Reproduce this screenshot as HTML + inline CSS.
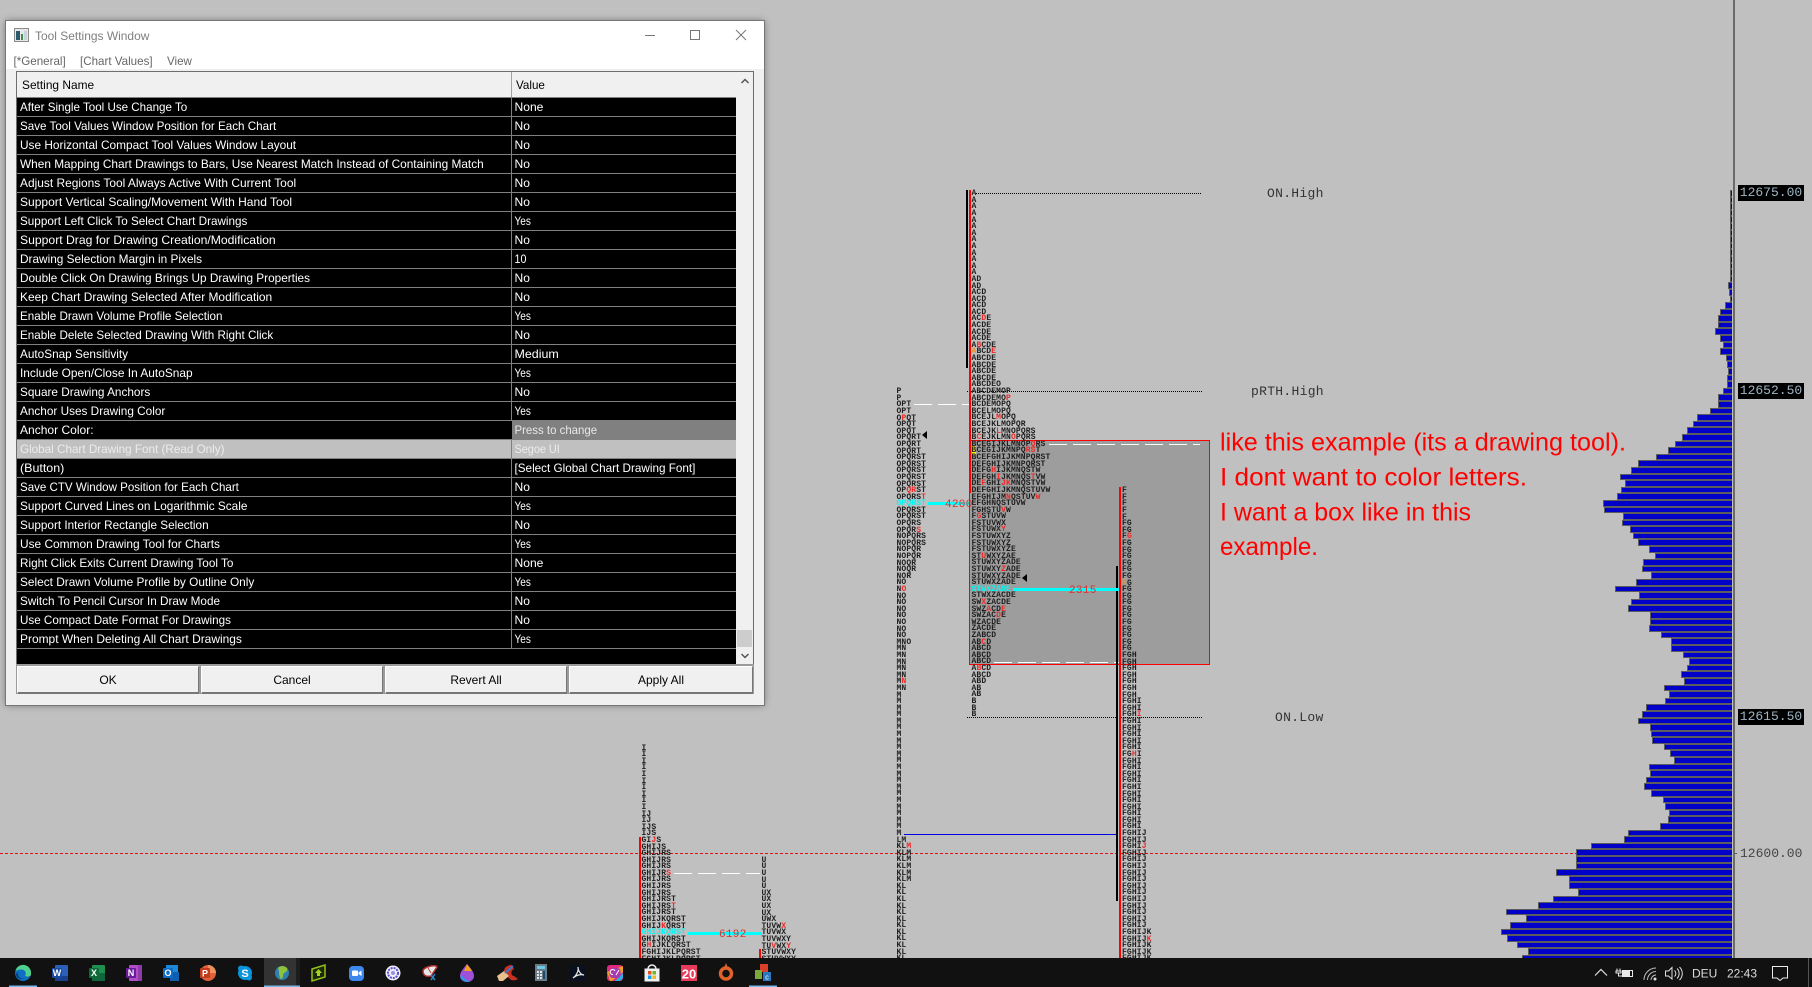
<!DOCTYPE html>
<html lang="en"><head><meta charset="utf-8"><title>Tool Settings Window</title>
<style>
html,body{margin:0;padding:0;background:#c0c0c0}
#p{position:relative;width:1812px;height:987px;overflow:hidden;background:#c0c0c0;font-family:"Liberation Sans",sans-serif}
.a{position:absolute}
pre{position:absolute;margin:0;font:bold 8px/6.6px "Liberation Mono",monospace;color:#1e1e1e;letter-spacing:.13px}
pre b{color:#f02828}
pre em{font-style:normal;color:#f08a1a}
pre s{text-decoration:none;color:#00f6f6}
pre u{text-decoration:none;background:#f2f20a}
.dash{position:absolute;height:1px;background:repeating-linear-gradient(90deg,#fff 0 18px,transparent 18px 24px)}
.dot{position:absolute;height:1px;background:repeating-linear-gradient(90deg,#000 0 1px,transparent 1px 2px)}
.num{position:absolute;font:11px/12px "Liberation Mono",monospace;color:#d83030;letter-spacing:.3px}
.pl{position:absolute;left:1738px;width:66px;height:16px;background:#000;color:#9fb4c2;font:13px/16px "Liberation Mono",monospace;text-align:center}
.lbl{position:absolute;font:13px/14px "Liberation Mono",monospace;color:#333;letter-spacing:.3px}
#bars{position:absolute;left:1480px;top:190px;width:252px}
#bars i{display:block;height:6.6px;box-sizing:border-box;border:1px solid #5c5c5c;border-right:0;background:#0000c8}
#win{position:absolute;left:6px;top:21px;width:758px;height:684px;background:#f0f0f0;box-shadow:0 0 7px rgba(0,0,0,.45);outline:1px solid #777;font-size:12px}
#rows{position:absolute;left:17px;top:98px;width:719px;height:566px;background:#000}
.r{display:flex;height:18px;border-bottom:1px solid #808080}
.r span:first-child{width:494px;border-right:1px solid #808080}
.r span:last-child{flex:1}
.btn{position:absolute;top:666px;height:25px;background:#f0f0f0;border:1px solid #fff;border-right-color:#777;border-bottom:2px solid #777;text-align:center;line-height:26px;color:#000;font-size:12px;box-sizing:content-box}
</style></head><body><div id="p">

<!-- chart drawing box -->
<div class="a" style="left:969px;top:440px;width:239px;height:223px;background:#9d9d9d;border:1px solid #f00"></div>

<!-- profile bars -->
<div id="bars"><i style="margin-left:250px"></i><i style="margin-left:250px"></i><i style="margin-left:250px"></i><i style="margin-left:250px"></i><i style="margin-left:250px"></i><i style="margin-left:250px"></i><i style="margin-left:250px"></i><i style="margin-left:250px"></i><i style="margin-left:250px"></i><i style="margin-left:250px"></i><i style="margin-left:250px"></i><i style="margin-left:250px"></i><i style="margin-left:250px"></i><i style="margin-left:250px"></i><i style="margin-left:248px"></i><i style="margin-left:249px"></i><i style="margin-left:250px"></i><i style="margin-left:245px"></i><i style="margin-left:240px"></i><i style="margin-left:238px"></i><i style="margin-left:238px"></i><i style="margin-left:235px"></i><i style="margin-left:240px"></i><i style="margin-left:243px"></i><i style="margin-left:240px"></i><i style="margin-left:246px"></i><i style="margin-left:247px"></i><i style="margin-left:248px"></i><i style="margin-left:247px"></i><i style="margin-left:247px"></i><i style="margin-left:243px"></i><i style="margin-left:238px"></i><i style="margin-left:238px"></i><i style="margin-left:230px"></i><i style="margin-left:217px"></i><i style="margin-left:213px"></i><i style="margin-left:207px"></i><i style="margin-left:202px"></i><i style="margin-left:195px"></i><i style="margin-left:188px"></i><i style="margin-left:176px"></i><i style="margin-left:158px"></i><i style="margin-left:151px"></i><i style="margin-left:140px"></i><i style="margin-left:145px"></i><i style="margin-left:141px"></i><i style="margin-left:137px"></i><i style="margin-left:123px"></i><i style="margin-left:124px"></i><i style="margin-left:143px"></i><i style="margin-left:142px"></i><i style="margin-left:150px"></i><i style="margin-left:153px"></i><i style="margin-left:158px"></i><i style="margin-left:169px"></i><i style="margin-left:175px"></i><i style="margin-left:163px"></i><i style="margin-left:162px"></i><i style="margin-left:171px"></i><i style="margin-left:156px"></i><i style="margin-left:135px"></i><i style="margin-left:159px"></i><i style="margin-left:151px"></i><i style="margin-left:148px"></i><i style="margin-left:170px"></i><i style="margin-left:170px"></i><i style="margin-left:169px"></i><i style="margin-left:181px"></i><i style="margin-left:191px"></i><i style="margin-left:191px"></i><i style="margin-left:203px"></i><i style="margin-left:209px"></i><i style="margin-left:207px"></i><i style="margin-left:201px"></i><i style="margin-left:204px"></i><i style="margin-left:184px"></i><i style="margin-left:189px"></i><i style="margin-left:185px"></i><i style="margin-left:166px"></i><i style="margin-left:162px"></i><i style="margin-left:158px"></i><i style="margin-left:170px"></i><i style="margin-left:171px"></i><i style="margin-left:172px"></i><i style="margin-left:184px"></i><i style="margin-left:190px"></i><i style="margin-left:194px"></i><i style="margin-left:169px"></i><i style="margin-left:170px"></i><i style="margin-left:166px"></i><i style="margin-left:164px"></i><i style="margin-left:171px"></i><i style="margin-left:183px"></i><i style="margin-left:185px"></i><i style="margin-left:189px"></i><i style="margin-left:188px"></i><i style="margin-left:180px"></i><i style="margin-left:148px"></i><i style="margin-left:144px"></i><i style="margin-left:111px"></i><i style="margin-left:96px"></i><i style="margin-left:96px"></i><i style="margin-left:96px"></i><i style="margin-left:76px"></i><i style="margin-left:89px"></i><i style="margin-left:89px"></i><i style="margin-left:98px"></i><i style="margin-left:73px"></i><i style="margin-left:58px"></i><i style="margin-left:26px"></i><i style="margin-left:46px"></i><i style="margin-left:30px"></i><i style="margin-left:21px"></i><i style="margin-left:27px"></i><i style="margin-left:37px"></i><i style="margin-left:48px"></i><i style="margin-left:42px"></i></div>
<div class="a" style="left:1733px;top:0;width:2px;height:958px;background:#6a6a6a"></div>

<!-- lines -->
<div class="a" style="left:0;top:853px;width:1576px;height:1px;background:repeating-linear-gradient(90deg,#e01010 0 3px,transparent 3px 5px)"></div>
<div class="dot" style="left:976px;top:193px;width:226px"></div>
<div class="dot" style="left:967px;top:391px;width:235px"></div>
<div class="dot" style="left:967px;top:717px;width:235px"></div>
<div class="dash" style="left:914px;top:404px;width:55px"></div>
<div class="dash" style="left:1049px;top:444px;width:151px"></div>
<div class="dash" style="left:994px;top:662px;width:126px"></div>
<div class="dash" style="left:674px;top:873px;width:86px"></div>
<div class="a" style="left:966px;top:190px;width:2px;height:178px;background:#000"></div>
<div class="a" style="left:969px;top:190px;width:2px;height:303px;background:#f00"></div>
<div class="a" style="left:1116px;top:566px;width:2px;height:335px;background:#000"></div>
<div class="a" style="left:1119px;top:487px;width:2px;height:471px;background:#f00"></div>
<div class="a" style="left:639px;top:837px;width:2px;height:121px;background:#f00"></div>
<div class="a" style="left:759px;top:949px;width:2px;height:9px;background:#f00"></div>
<div class="a" style="left:904px;top:834px;width:212px;height:1px;background:#0000e0"></div>
<div class="a" style="left:928px;top:502px;width:41px;height:3px;background:#0ff"></div>
<div class="a" style="left:1013px;top:588px;width:106px;height:3px;background:#0ff"></div>
<div class="a" style="left:688px;top:932px;width:74px;height:3px;background:#0ff"></div>
<div class="num" style="left:945px;top:499px">4200</div>
<div class="num" style="left:1069px;top:585px">2315</div>
<div class="num" style="left:719px;top:929px">6192</div>
<svg class="a" style="left:920px;top:428px" width="14" height="14"><polygon points="2,7 7,3 7,11" fill="#000"/></svg>
<svg class="a" style="left:1020px;top:571px" width="14" height="14"><polygon points="2,7 7,3 7,11" fill="#000"/></svg>

<!-- TPO letters -->
<pre style="left:971.5px;top:191.2px">A
A
A
A
A
A
A
A
A
A
A
A
A
AD
AD
ACD
ACD
ACD
ACD
AC<b>D</b>E
ACDE
ACDE
ACDE
A<b>B</b>CDE
<em>A</em>BCD<b>E</b>
ABCDE
ABCDE
ABCDE
ABCDE
ABCDEO
ABCDEMOP
ABCDEMO<b>P</b>
BCDEMOPQ
BCELMOPQ
BCEJL<b>M</b>OPQ
BCEJKLMOPQR
BCEJK<b>L</b>MNOPQRS
B<b>C</b>EJKLMN<b>O</b>PQRS
BCEGIJKLMNOP<b>Q</b>RS
<u>B</u>CEGIJKMNPQ<b>RS</b>T
BCEFGHIJKMNPQRST
DEFGHIJKMNPQRST
DEFG<b>H</b>IJKMNQSTW
DEFGH<b>I</b>JKMNQS<b>T</b>VW
DE<b>F</b>GHI<b>JK</b>MNQSTVW
DEFGHIJKMNQSTUVW
EFGHIJM<b>N</b>QSTUV<b>W</b>
EFGHNQSTUVW
FGHSTU<b>V</b>W
F<b>G</b>STUVW
FSTUVWX
FSTUWX<b>Y</b>
FSTUWXYZ
FSTUWXYZ
FSTUWXYZE
ST<b>U</b>WXYZAE
STUWXYZADE
STUWXY<b>Z</b>ADE
STUWXYZADE
STUWXZADE
<s>STWXZADE</s>
STWXZACDE
SW<b>X</b>ZACDE
SWZ<b>A</b>CD<b>E</b>
SWZAC<b>D</b>E
WZACDE
ZACDE
ZABCD
AB<b>C</b>D
ABCD
ABCD
ABCD
A<b>B</b>CD
ABCD
ABD
AB
AB
B
B
B</pre>
<pre style="left:896.5px;top:389.2px">P
P
OPT
OPT
O<b>P</b>QT
OPQT
OPQT
OPQRT
OPQRT
OPQRT
OPQRST
OPQRST
OPQRST
OPQRST
OPQRST
OP<b>QR</b>ST
OPQRS<b>T</b>
<s>OPQRST</s>
OPQRST
OPQRST
OPQRS
OPQR<b>S</b>
NOPQRS
NOPQRS
NOPQR
NOPQR
NOQR
NOQR
NOR
NO
N<b>O</b>
NO
NO
NO
NO
NO
NO
NO
MNO
MN
MN
MN
MN
MN
M<b>N</b>
MN
M
M
M
M
M
M
M
M
M
M
M
M
M
M
M
M
M
M
M
M
M
M
LM
KL<b>M</b>
KLM
KLM
KLM
KLM
KLM
KL
KL
KL
KL
KL
KL
KL
KL
KL
KL
KL
KL</pre>
<pre style="left:641.5px;top:745.6px">I
I
I
I
I
I
I
I
I
I
IJ
IJ
IJS
IJS
GI<b>J</b>S
GHIJS
GHIJRS
GHIJRS
GHIJRS
GHIJR<b>S</b>
GHIJRS
GHIJRS
GHIJRS
GHIJRST
GHIJRS<b>T</b>
GHIJRST
GHIJKQRST
GHIJ<b>K</b>QRST
<s>GHIJKQRST</s>
GHIJKQRST
G<b>H</b>IJKLQRST
FGHIJKLPQRST
FGHIJKLPQRST</pre>
<pre style="left:761.5px;top:857.8px">U
U
U
U
U
UX
UX
UX
UX
UWX
TUVW<b>X</b>
TUVWX
TUVWXY
TU<b>V</b>WX<b>Y</b>
STUVWXY
STUVWXY</pre>
<pre style="left:1122px;top:488.2px">F
F
F
F
F
FG
FG
F<b>G</b>
FG
FG
FG
FG
FG
FG
<em>F</em>G
FG
FG
FG
FG
FG
FG
FG
FG
FG
FG
FGH
FGH
FGH
FGH
FGH
FGH
FGH
FGHI
FGHI
FGH<b>I</b>
FGHI
FGHI
FGHI
FGHI
FGHI
FG<b>H</b>I
FGHI
FGHI
FGHI
FGHI
FGHI
FGHI
FGHI
FGHI
FGHI
FGHI
FGHI
FGHIJ
FGHIJ
FGHI<b>J</b>
FGHIJ
FGHIJ
FGHIJ
FGHIJ
FGHIJ
FGHIJ
FGHIJ
FGHIJ
FGHIJ
FGHIJ
FGHIJ
FGHIJ
FGHIJK
FGHIJ<b>K</b>
FGHIJK
FGHIJK
FGHIJK</pre>

<!-- labels -->
<div class="lbl" style="left:1267px;top:187px">ON.High</div>
<div class="lbl" style="left:1251px;top:385px">pRTH.High</div>
<div class="lbl" style="left:1275px;top:711px">ON.Low</div>
<div class="pl" style="top:185px">12675.00</div>
<div class="pl" style="top:383px">12652.50</div>
<div class="pl" style="top:709px">12615.50</div>
<div class="a" style="left:1735px;top:853px;width:2px;height:1px;background:#555"></div>
<div class="a" style="left:1740px;top:846px;font:13px/16px 'Liberation Mono',monospace;color:#444">12600.00</div>

<!-- red annotation -->
<svg class="a" style="left:1200px;top:420px" width="460" height="150">
<g font-family="Liberation Sans, sans-serif" font-size="25" fill="#f00">
<text x="20" y="30.5" textLength="406" lengthAdjust="spacingAndGlyphs">like this example (its a drawing tool).</text>
<text x="20" y="65.5" textLength="307" lengthAdjust="spacingAndGlyphs">I dont want to color letters.</text>
<text x="20" y="100.5" textLength="251" lengthAdjust="spacingAndGlyphs">I want a box like in this</text>
<text x="20" y="135" textLength="98" lengthAdjust="spacingAndGlyphs">example.</text>
</g></svg>

<!-- settings window -->
<div id="win"></div>
<div class="a" style="left:6px;top:21px;width:758px;height:48px;background:#fff"></div>
<svg class="a" style="left:14px;top:28px" width="16" height="15"><rect x=".5" y=".5" width="14" height="13" fill="#e8e8e8" stroke="#8a8a8a"/><rect x="2" y="3" width="4" height="9" fill="#2c5a6a"/><rect x="7" y="6" width="2" height="6" fill="#3f8f4f"/><rect x="10" y="3" width="3" height="9" fill="#c9d3d8"/></svg>
<svg class="a" style="left:640px;top:25px" width="112" height="20" fill="none" stroke="#777"><path d="M5 10.5H15"/><rect x="50.5" y="5.5" width="9" height="9"/><path d="M96 5L106 15M106 5L96 15"/></svg>

<div class="a" style="left:16px;top:71px;width:738px;height:623px;background:#f0f0f0;box-shadow:inset 0 0 0 1px #6e6e6e"></div>
<div class="a" style="left:17px;top:97px;width:719px;height:1px;background:#808080"></div>
<div class="a" style="left:511px;top:72px;width:1px;height:25px;background:#a0a0a0"></div>

<div id="rows">
<div class="r"><span></span><span></span></div><div class="r"><span></span><span></span></div><div class="r"><span></span><span></span></div><div class="r"><span></span><span></span></div><div class="r"><span></span><span></span></div><div class="r"><span></span><span></span></div><div class="r"><span></span><span></span></div><div class="r"><span></span><span></span></div><div class="r"><span></span><span></span></div><div class="r"><span></span><span></span></div><div class="r"><span></span><span></span></div><div class="r"><span></span><span></span></div><div class="r"><span></span><span></span></div><div class="r"><span></span><span></span></div><div class="r"><span></span><span></span></div><div class="r"><span></span><span></span></div><div class="r"><span></span><span></span></div>
<div class="r"><span style="border-right-color:#000"></span><span style="background:#808080"></span></div>
<div class="r" style="background:#c0c0c0"><span></span><span></span></div>
<div class="r"><span></span><span></span></div><div class="r"><span></span><span></span></div><div class="r"><span></span><span></span></div><div class="r"><span></span><span></span></div><div class="r"><span></span><span></span></div><div class="r"><span></span><span></span></div><div class="r"><span></span><span></span></div><div class="r"><span></span><span></span></div><div class="r"><span></span><span></span></div><div class="r"><span></span><span></span></div>
</div>

<!-- window text -->
<svg class="a" style="left:0;top:0" width="780" height="700" font-family="Liberation Sans, sans-serif" font-size="12">
<g fill="#7f7f7f"><text x="35" y="40" textLength="114.4" lengthAdjust="spacingAndGlyphs">Tool Settings Window</text></g>
<g fill="#666">
<text x="13.5" y="65" textLength="52.2" lengthAdjust="spacingAndGlyphs">[*General]</text>
<text x="80" y="65" textLength="72.6" lengthAdjust="spacingAndGlyphs">[Chart Values]</text>
<text x="167" y="65" textLength="24.9" lengthAdjust="spacingAndGlyphs">View</text>
</g>
<g fill="#000">
<text x="22" y="89" textLength="72.1" lengthAdjust="spacingAndGlyphs">Setting Name</text>
<text x="516" y="89" textLength="28.9" lengthAdjust="spacingAndGlyphs">Value</text>
</g>
<g fill="#fff" lengthAdjust="spacingAndGlyphs">
<text x="20" y="111" textLength="167.2" lengthAdjust="spacingAndGlyphs">After Single Tool Use Change To</text>
<text x="20" y="130" textLength="256.2" lengthAdjust="spacingAndGlyphs">Save Tool Values Window Position for Each Chart</text>
<text x="20" y="149" textLength="276.1" lengthAdjust="spacingAndGlyphs">Use Horizontal Compact Tool Values Window Layout</text>
<text x="20" y="168" textLength="463.7" lengthAdjust="spacingAndGlyphs">When Mapping Chart Drawings to Bars, Use Nearest Match Instead of Containing Match</text>
<text x="20" y="187" textLength="276.1" lengthAdjust="spacingAndGlyphs">Adjust Regions Tool Always Active With Current Tool</text>
<text x="20" y="206" textLength="272.1" lengthAdjust="spacingAndGlyphs">Support Vertical Scaling/Movement With Hand Tool</text>
<text x="20" y="225" textLength="227.4" lengthAdjust="spacingAndGlyphs">Support Left Click To Select Chart Drawings</text>
<text x="20" y="244" textLength="255.7" lengthAdjust="spacingAndGlyphs">Support Drag for Drawing Creation/Modification</text>
<text x="20" y="263" textLength="182.1" lengthAdjust="spacingAndGlyphs">Drawing Selection Margin in Pixels</text>
<text x="20" y="282" textLength="290" lengthAdjust="spacingAndGlyphs">Double Click On Drawing Brings Up Drawing Properties</text>
<text x="20" y="301" textLength="252.2" lengthAdjust="spacingAndGlyphs">Keep Chart Drawing Selected After Modification</text>
<text x="20" y="320" textLength="202.5" lengthAdjust="spacingAndGlyphs">Enable Drawn Volume Profile Selection</text>
<text x="20" y="339" textLength="253.2" lengthAdjust="spacingAndGlyphs">Enable Delete Selected Drawing With Right Click</text>
<text x="20" y="358" textLength="108" lengthAdjust="spacingAndGlyphs">AutoSnap Sensitivity</text>
<text x="20" y="377" textLength="172.6" lengthAdjust="spacingAndGlyphs">Include Open/Close In AutoSnap</text>
<text x="20" y="396" textLength="130.3" lengthAdjust="spacingAndGlyphs">Square Drawing Anchors</text>
<text x="20" y="415" textLength="145.3" lengthAdjust="spacingAndGlyphs">Anchor Uses Drawing Color</text>
<text x="20" y="434" textLength="73.6" lengthAdjust="spacingAndGlyphs">Anchor Color:</text>
<text x="20" y="453" textLength="204.5" lengthAdjust="spacingAndGlyphs" fill="#ececec">Global Chart Drawing Font (Read Only)</text>
<text x="20" y="472" textLength="44.3" lengthAdjust="spacingAndGlyphs">(Button)</text>
<text x="20" y="491" textLength="218.9" lengthAdjust="spacingAndGlyphs">Save CTV Window Position for Each Chart</text>
<text x="20" y="510" textLength="227.4" lengthAdjust="spacingAndGlyphs">Support Curved Lines on Logarithmic Scale</text>
<text x="20" y="529" textLength="188.6" lengthAdjust="spacingAndGlyphs">Support Interior Rectangle Selection</text>
<text x="20" y="548" textLength="200" lengthAdjust="spacingAndGlyphs">Use Common Drawing Tool for Charts</text>
<text x="20" y="567" textLength="213.4" lengthAdjust="spacingAndGlyphs">Right Click Exits Current Drawing Tool To</text>
<text x="20" y="586" textLength="234.3" lengthAdjust="spacingAndGlyphs">Select Drawn Volume Profile by Outline Only</text>
<text x="20" y="605" textLength="200" lengthAdjust="spacingAndGlyphs">Switch To Pencil Cursor In Draw Mode</text>
<text x="20" y="624" textLength="210.9" lengthAdjust="spacingAndGlyphs">Use Compact Date Format For Drawings</text>
<text x="20" y="643" textLength="221.9" lengthAdjust="spacingAndGlyphs">Prompt When Deleting All Chart Drawings</text>

<text x="514.5" y="111" textLength="28.9" lengthAdjust="spacingAndGlyphs">None</text>
<text x="514.5" y="130" textLength="15.4" lengthAdjust="spacingAndGlyphs">No</text>
<text x="514.5" y="149" textLength="15.4" lengthAdjust="spacingAndGlyphs">No</text>
<text x="514.5" y="168" textLength="15.4" lengthAdjust="spacingAndGlyphs">No</text>
<text x="514.5" y="187" textLength="15.4" lengthAdjust="spacingAndGlyphs">No</text>
<text x="514.5" y="206" textLength="15.4" lengthAdjust="spacingAndGlyphs">No</text>
<text x="514.5" y="225" textLength="16.4" lengthAdjust="spacingAndGlyphs">Yes</text>
<text x="514.5" y="244" textLength="15.4" lengthAdjust="spacingAndGlyphs">No</text>
<text x="514.5" y="263" textLength="11.9" lengthAdjust="spacingAndGlyphs">10</text>
<text x="514.5" y="282" textLength="15.4" lengthAdjust="spacingAndGlyphs">No</text>
<text x="514.5" y="301" textLength="15.4" lengthAdjust="spacingAndGlyphs">No</text>
<text x="514.5" y="320" textLength="16.4" lengthAdjust="spacingAndGlyphs">Yes</text>
<text x="514.5" y="339" textLength="15.4" lengthAdjust="spacingAndGlyphs">No</text>
<text x="514.5" y="358" textLength="44.3" lengthAdjust="spacingAndGlyphs">Medium</text>
<text x="514.5" y="377" textLength="16.4" lengthAdjust="spacingAndGlyphs">Yes</text>
<text x="514.5" y="396" textLength="15.4" lengthAdjust="spacingAndGlyphs">No</text>
<text x="514.5" y="415" textLength="16.4" lengthAdjust="spacingAndGlyphs">Yes</text>
<text x="514.5" y="434" textLength="82.6" lengthAdjust="spacingAndGlyphs" fill="#e8e8e8">Press to change</text>
<text x="514.5" y="453" textLength="45.3" lengthAdjust="spacingAndGlyphs" fill="#ececec">Segoe UI</text>
<text x="514.5" y="472" textLength="180.9" lengthAdjust="spacingAndGlyphs">[Select Global Chart Drawing Font]</text>
<text x="514.5" y="491" textLength="15.4" lengthAdjust="spacingAndGlyphs">No</text>
<text x="514.5" y="510" textLength="16.4" lengthAdjust="spacingAndGlyphs">Yes</text>
<text x="514.5" y="529" textLength="15.4" lengthAdjust="spacingAndGlyphs">No</text>
<text x="514.5" y="548" textLength="16.4" lengthAdjust="spacingAndGlyphs">Yes</text>
<text x="514.5" y="567" textLength="28.9" lengthAdjust="spacingAndGlyphs">None</text>
<text x="514.5" y="586" textLength="16.4" lengthAdjust="spacingAndGlyphs">Yes</text>
<text x="514.5" y="605" textLength="15.4" lengthAdjust="spacingAndGlyphs">No</text>
<text x="514.5" y="624" textLength="15.4" lengthAdjust="spacingAndGlyphs">No</text>
<text x="514.5" y="643" textLength="16.4" lengthAdjust="spacingAndGlyphs">Yes</text>
</g>
</svg>

<!-- scrollbar -->
<div class="a" style="left:737px;top:630px;width:15px;height:17px;background:#cdcdcd"></div>
<svg class="a" style="left:737px;top:72px" width="16" height="16" fill="none" stroke="#555" stroke-width="1.5"><path d="M4.500 11L8 7.500L11.500 11"/></svg>
<svg class="a" style="left:737px;top:648px" width="16" height="16" fill="none" stroke="#555" stroke-width="1.5"><path d="M4.500 6L8 9.500L11.500 6"/></svg>

<!-- buttons -->
<div class="a" style="left:16px;top:664px;width:738px;height:30px;background:#9a9a9a"></div>
<div class="btn" style="left:17px;width:180px">OK</div>
<div class="btn" style="left:201px;width:180px">Cancel</div>
<div class="btn" style="left:385px;width:180px">Revert All</div>
<div class="btn" style="left:569px;width:182px">Apply All</div>

<!-- taskbar -->
<svg class="a" style="left:0;top:958px" width="1812" height="29" font-family="Liberation Sans, sans-serif">
<rect width="1812" height="29" fill="#111"/>
<rect x="264" width="32" height="29" fill="#333"/><rect x="296" width="4" height="29" fill="#1d1d1d"/>
<rect x="9" y="27.5" width="28" height="1.5" fill="#76b9ed"/><rect x="264" y="27.5" width="36" height="1.5" fill="#76b9ed"/><rect x="749" y="27.5" width="28" height="1.5" fill="#76b9ed"/>
<!-- edge -->
<circle cx="23" cy="15" r="8" fill="#0f6fc0"/><path d="M15.500 13C17 7 23 6 26 7.500C30 9 31.500 13 31 16.500C31 18.500 27 19 25 18C27 15 25 11.500 21.500 11.500C18.500 11.500 16.500 12.500 15.500 13Z" fill="#4fd08d"/><path d="M18 14.500C17.500 19 21 21 24 20.500C21.500 21.500 17 21 16 17C16 15.500 17 14.500 18 14.500Z" fill="#0a3f80"/>
<!-- word -->
<rect x="55" y="7" width="13" height="16" rx="1" fill="#2b5fb8"/><rect x="55" y="18" width="13" height="5" fill="#1a3f8f"/><rect x="52" y="10" width="10" height="10" rx="1" fill="#1a4aa0"/><text x="57" y="18" font-size="9" font-weight="bold" fill="#fff" text-anchor="middle">W</text>
<!-- excel -->
<rect x="92" y="7" width="13" height="16" rx="1" fill="#1f8f50"/><rect x="92" y="15" width="13" height="8" fill="#10663a"/><rect x="89" y="10" width="10" height="10" rx="1" fill="#0e6a38"/><text x="94" y="18" font-size="9" font-weight="bold" fill="#fff" text-anchor="middle">X</text>
<!-- onenote -->
<rect x="129" y="7" width="13" height="16" rx="1" fill="#b04ec8"/><rect x="138" y="7" width="4" height="16" fill="#8e3aa8"/><rect x="126" y="10" width="10" height="10" rx="1" fill="#6a1b9a"/><text x="131" y="18" font-size="9" font-weight="bold" fill="#fff" text-anchor="middle">N</text>
<!-- outlook -->
<rect x="166" y="7" width="12" height="12" fill="#1e88d8"/><rect x="170" y="14" width="9" height="9" fill="#0f5fb0"/><rect x="163" y="10" width="10" height="10" rx="1" fill="#0f6cc0"/><text x="168" y="18" font-size="9" font-weight="bold" fill="#fff" text-anchor="middle">O</text>
<!-- powerpoint -->
<circle cx="208" cy="15" r="8" fill="#e0603a"/><path d="M208 15V7A8 8 0 0 1 216 15Z" fill="#f0905f"/><rect x="200" y="10" width="10" height="10" rx="1" fill="#c23b1c"/><text x="205" y="18.500" font-size="9" font-weight="bold" fill="#fff" text-anchor="middle">P</text>
<!-- skype -->
<circle cx="245" cy="15" r="7" fill="#0a94dc"/><circle cx="241" cy="10.500" r="3" fill="#0a94dc"/><circle cx="249" cy="19.500" r="3" fill="#0a94dc"/><text x="245" y="19" font-size="11" font-weight="bold" fill="#fff" text-anchor="middle">S</text>
<!-- globe -->
<circle cx="282" cy="15" r="7" fill="#2f7fb0"/><path d="M278 10C281 7 285 8 287 10C288 13 286 14 284 15C282 18 284 20 281 21C278 18 280 14 278 10Z" fill="#8fc23a"/>
<!-- green app -->
<path d="M312 11L325 7V19L312 23Z" fill="#1a2a08" stroke="#94c01a" stroke-width="1.500"/><path d="M318.500 11L322 15H320V18H317V15H315Z" fill="#a8d020"/>
<!-- zoom -->
<rect x="349" y="8" width="15" height="15" rx="4" fill="#3c88ec"/><rect x="352" y="12.500" width="6" height="5.500" rx="1" fill="#fff"/><path d="M358.500 14.500L361.500 12.500V18L358.500 16Z" fill="#fff"/>
<!-- circle gear -->
<circle cx="393" cy="15" r="7.500" fill="#f0f0fa"/><circle cx="393" cy="15" r="5" fill="none" stroke="#5a4fc8" stroke-width="2" stroke-dasharray="2 1"/><circle cx="393" cy="15" r="2" fill="#9a90e0"/>
<!-- snip -->
<path d="M423 13C423 9 436 6 437 9L431 18C427 19 423 18 423 13Z" fill="#e8e8e8" stroke="#b03030" stroke-width="1.500"/><path d="M431 17L435 22M435 16L431 22" stroke="#2a8ac8" stroke-width="1.500" fill="none"/><path d="M428 10L431 15" stroke="#c84040"/>
<!-- drop -->
<path d="M467 6C471 11 474 14 474 18A7 6 0 0 1 460 18C460 14 463 11 467 6Z" fill="#a04fd8"/><path d="M467 6C469 9 471 11 472 13L464 13C465 11 466 9 467 6Z" fill="#f0a020"/><path d="M460.500 19A7 6 0 0 0 470 23.500C466 22 463 20 461 16Z" fill="#2a9ae8"/>
<!-- ccleaner -->
<path d="M512 7C505 7 503 12 504 16L509 20C511 23 515 23 518 21L514 18C511 18 510 13 514 11Z" fill="#c83020"/><path d="M497 18L504 13L509 18L503 23H499Z" fill="#e8c090"/><path d="M505 15L513 8" stroke="#3a78c8" stroke-width="2"/>
<!-- calculator -->
<rect x="535" y="6" width="12" height="17" fill="#6a7a86"/><rect x="537" y="8" width="8" height="3" fill="#6ac8e8"/><g fill="#dfe6ea"><rect x="537" y="13" width="2" height="2"/><rect x="540" y="13" width="2" height="2"/><rect x="537" y="16" width="2" height="2"/><rect x="540" y="16" width="2" height="2"/><rect x="537" y="19" width="2" height="2"/><rect x="540" y="19" width="2" height="2"/></g><rect x="543" y="13" width="2" height="8" fill="#1a4a70"/>
<!-- acrobat -->
<rect x="570" y="7" width="16" height="16" rx="1" fill="#0a1020"/><path d="M573 20C576 18 579 13 578 9C578 13 581 17 584 17C581 16 576 17 573 20Z" fill="none" stroke="#e8e8e8" stroke-width="1.200"/>
<!-- cc -->
<rect x="607" y="7" width="16" height="16" rx="3" fill="#e02a80"/><path d="M607 14L623 8V14L612 23H610Z" fill="#f0a020"/><path d="M615 23L623 15V20L620 23Z" fill="#30b0e0"/><rect x="609.500" y="10" width="11" height="10" rx="3" fill="#a83ab0"/><path d="M613 16.500A2.500 2.500 0 1 1 615 13M616 17L619 12" stroke="#fff" fill="none"/>
<!-- store -->
<path d="M648 11A4 4 0 0 1 656 11" fill="none" stroke="#eee" stroke-width="1.500"/><rect x="644.500" y="10.500" width="15" height="13" fill="#f0f0f0"/><rect x="648" y="13" width="3.500" height="3.500" fill="#e8502a"/><rect x="652.500" y="13" width="3.500" height="3.500" fill="#70b820"/><rect x="648" y="17.500" width="3.500" height="3.500" fill="#10a0e8"/><rect x="652.500" y="17.500" width="3.500" height="3.500" fill="#f8b818"/>
<!-- 20 -->
<rect x="681" y="7" width="16" height="16" fill="#e83a5a"/><text x="689" y="20.500" font-size="13" font-weight="bold" fill="#fff" text-anchor="middle">20</text>
<!-- origin -->
<circle cx="726" cy="15.500" r="5.500" fill="none" stroke="#e0622a" stroke-width="3.500"/><path d="M726 5L728 10H724Z" fill="#e0622a"/>
<!-- blocks -->
<rect x="760" y="6" width="8" height="8" fill="#d8402a"/><rect x="755" y="12" width="7" height="9" fill="#7aa83a"/><rect x="763" y="14" width="8" height="9" fill="#2a78c0"/><text x="767" y="21.500" font-size="7" fill="#fff" text-anchor="middle">c</text>
<!-- tray -->
<polyline points="1595,17.500 1601,11.500 1607,17.500" fill="none" stroke="#e0e0e0" stroke-width="1.200"/>
<rect x="1622.500" y="12.500" width="10" height="6" fill="none" stroke="#e8e8e8"/><rect x="1623" y="13" width="7" height="5" fill="#e8e8e8"/><path d="M1617 10.500V13M1620 10.500V13M1616 13H1621V15H1616ZM1618.500 15V18H1622" stroke="#e8e8e8" fill="none"/>
<path d="M1644 22A12 12 0 0 1 1656 10M1647.500 22A8.500 8.500 0 0 1 1656 13.500M1651 22A5 5 0 0 1 1656 17" fill="none" stroke="#bdbdbd" stroke-width="1"/><circle cx="1655" cy="21" r="1.500" fill="#e0e0e0"/>
<path d="M1665.500 13H1668.500L1672 9.500V21L1668.500 18H1665.500Z" fill="none" stroke="#e0e0e0"/><path d="M1674.500 12.500A4 4 0 0 1 1674.500 18.500M1677 10.500A7 7 0 0 1 1677 20.500M1679.500 9A9 9 0 0 1 1679.500 22" fill="none" stroke="#e0e0e0"/>
<text x="1692" y="19.500" font-size="12" fill="#dcdcdc">DEU</text>
<text x="1727" y="19.500" font-size="12" fill="#dcdcdc">22:43</text>
<path d="M1772.500 8.500H1787.500V20H1783L1780 22.500L1777 20H1772.500Z" fill="none" stroke="#e8e8e8"/>
<rect x="1808" y="0" width="1" height="29" fill="#555"/>
</svg>

</div></body></html>
